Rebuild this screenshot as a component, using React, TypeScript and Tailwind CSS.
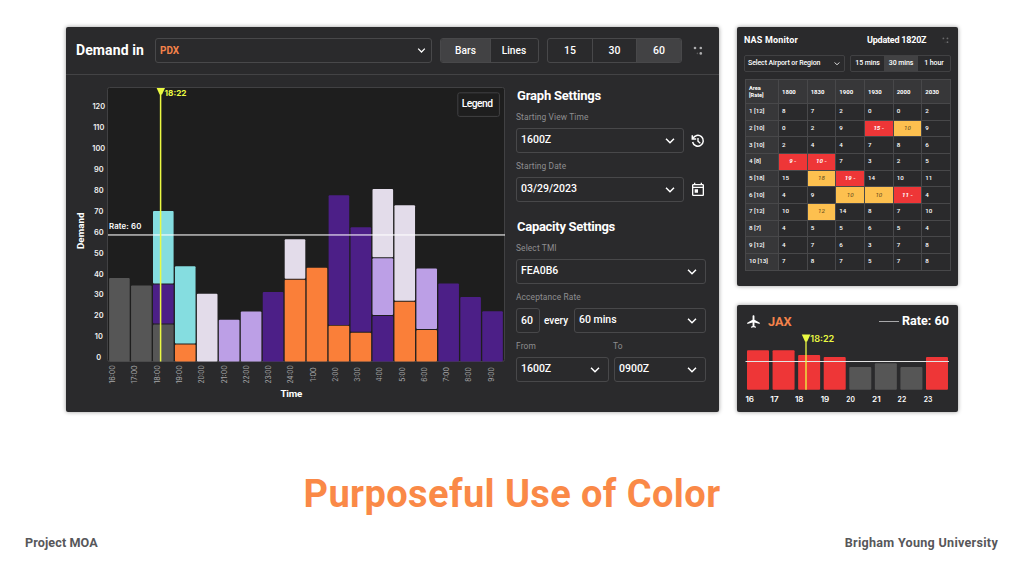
import { ReactNode } from "react"
import clsx from "clsx"
import { MdLocalAirport, MdOutlineToday } from "react-icons/md"

const ORANGE = "#fa7f39"
const PURPLE = "#4c1f87"
const LILAC = "#bc9fe6"
const PALE = "#e3dcea"
const CYAN = "#85dde0"
const GRAY = "#565656"
const RED = "#ee3637"
const YELLOW = "#ebfa42"

type Segment = { top: number; bottom: number; fill: string }

// Segment edges are measured down from the top of the plot
const BASE = 274
const demand: { time: string; segments: Segment[] }[] = [
  { time: "16:00", segments: [{ top: 190.5, bottom: BASE, fill: GRAY }] },
  { time: "17:00", segments: [{ top: 198, bottom: BASE, fill: GRAY }] },
  {
    time: "18:00",
    segments: [
      { top: 123.5, bottom: 196, fill: CYAN },
      { top: 197, bottom: 236, fill: PURPLE },
      { top: 237, bottom: BASE, fill: GRAY },
    ],
  },
  {
    time: "19:00",
    segments: [
      { top: 178.7, bottom: 256, fill: CYAN },
      { top: 257, bottom: BASE, fill: ORANGE },
    ],
  },
  { time: "20:00", segments: [{ top: 206.2, bottom: BASE, fill: PALE }] },
  { time: "21:00", segments: [{ top: 232.3, bottom: BASE, fill: LILAC }] },
  { time: "22:00", segments: [{ top: 224, bottom: BASE, fill: LILAC }] },
  { time: "23:00", segments: [{ top: 204.5, bottom: BASE, fill: PURPLE }] },
  {
    time: "24:00",
    segments: [
      { top: 151.7, bottom: 191.3, fill: PALE },
      { top: 192.3, bottom: BASE, fill: ORANGE },
    ],
  },
  { time: "1:00", segments: [{ top: 180.2, bottom: BASE, fill: ORANGE }] },
  {
    time: "2:00",
    segments: [
      { top: 107.7, bottom: 237.5, fill: PURPLE },
      { top: 238.3, bottom: BASE, fill: ORANGE },
    ],
  },
  {
    time: "3:00",
    segments: [
      { top: 139.8, bottom: 244.3, fill: PURPLE },
      { top: 245.3, bottom: BASE, fill: ORANGE },
    ],
  },
  {
    time: "4:00",
    segments: [
      { top: 101.5, bottom: 169.7, fill: PALE },
      { top: 170.7, bottom: 227.6, fill: LILAC },
      { top: 228.6, bottom: BASE, fill: PURPLE },
    ],
  },
  {
    time: "5:00",
    segments: [
      { top: 117.7, bottom: 213.2, fill: PALE },
      { top: 214.2, bottom: BASE, fill: ORANGE },
    ],
  },
  {
    time: "6:00",
    segments: [
      { top: 181, bottom: 241.6, fill: LILAC },
      { top: 242.6, bottom: BASE, fill: ORANGE },
    ],
  },
  { time: "7:00", segments: [{ top: 196, bottom: BASE, fill: PURPLE }] },
  { time: "8:00", segments: [{ top: 209.6, bottom: BASE, fill: PURPLE }] },
  { time: "9:00", segments: [{ top: 223.8, bottom: BASE, fill: PURPLE }] },
]

const monitorColumns = ["1800", "1830", "1900", "1930", "2000", "2030"]

// "!" marks a cell over capacity, "~" marks a cell at capacity
const monitorRows = [
  { area: "1 [12]", values: ["8", "7", "2", "0", "0", "2"] },
  { area: "2 [10]", values: ["0", "2", "9", "!15", "~10", "9"] },
  { area: "3 [10]", values: ["2", "4", "4", "7", "8", "6"] },
  { area: "4 [8]", values: ["!9", "!10", "7", "3", "2", "5"] },
  { area: "5 [18]", values: ["15", "~18", "!19", "14", "10", "11"] },
  { area: "6 [10]", values: ["4", "9", "~10", "~10", "!11", "4"] },
  { area: "7 [12]", values: ["10", "~12", "14", "8", "7", "10"] },
  { area: "8 [7]", values: ["4", "5", "5", "6", "5", "4"] },
  { area: "9 [12]", values: ["4", "7", "6", "3", "7", "8"] },
  { area: "10 [13]", values: ["7", "8", "7", "5", "7", "8"] },
]

const jaxBars = [
  { hour: "16", x: 749.7, top: 350.3, fill: RED },
  { hour: "17", x: 774.5, top: 350.3, fill: RED },
  { hour: "18", x: 799.2, top: 355, fill: RED },
  { hour: "19", x: 825, top: 357, fill: RED },
  { hour: "20", x: 850.6, top: 367, fill: GRAY },
  { hour: "21", x: 876.4, top: 363.3, fill: GRAY },
  { hour: "22", x: 901.9, top: 367, fill: GRAY },
  { hour: "23", x: 928, top: 357, fill: RED },
]

function Chevron({ className }: { className?: string }) {
  return (
    <svg viewBox="0 0 10 6" className={clsx("shrink-0", className)} fill="none" stroke="#fff" strokeWidth="1.5">
      <path d="M1 0.8 L5 4.8 L9 0.8" />
    </svg>
  )
}

function Dots({ className }: { className?: string }) {
  return (
    <svg viewBox="0 0 10 10" className={clsx("shrink-0", className)} fill="currentColor">
      <circle cx="2" cy="2" r="1.3" />
      <circle cx="7.8" cy="2" r="1.3" />
      <circle cx="7.8" cy="7.4" r="1.3" />
      <circle cx="4.4" cy="7.4" r="0.8" opacity="0.35" />
    </svg>
  )
}

function HistoryIcon({ className }: { className?: string }) {
  return (
    <svg viewBox="0 0 14 14" className={clsx("shrink-0", className)} fill="none" stroke="#fff" strokeWidth="1.5">
      <path d="M1.9 4.6 A5.4 5.4 0 1 1 1.6 8" />
      <path d="M1.3 1.2 V5 H5.2" />
      <path d="M7 4 V7.3 L9.3 9.3" strokeWidth="1.4" />
    </svg>
  )
}

function Select({ className, children }: { className?: string; children: ReactNode }) {
  return (
    <div
      className={clsx(
        "flex h-[25px] items-center justify-between rounded-[3px] border border-[#48484a] pl-1 pr-2 text-[10.5px] font-medium text-white",
        className
      )}
    >
      <span className="-translate-y-px">{children}</span>
      <Chevron className="h-[6px] w-[10px]" />
    </div>
  )
}

function FieldLabel({ children }: { children: ReactNode }) {
  return <div className="h-[11px] text-[8.4px] leading-[11px] tracking-[0.12px] text-[#8e8e90]">{children}</div>
}

function DemandChart() {
  return (
    <svg className="block h-[336px] w-[438px] shrink-0" viewBox="67 75 438 336" fontFamily="Inter, sans-serif">
      <rect x="107.5" y="87.5" width="397" height="274" rx="2" fill="#1e1e1e" stroke="#414143" />
      {demand.map(({ time, segments }, i) => (
        <g key={time}>
          {segments.map(({ top, bottom, fill }) => (
            <rect
              key={top}
              x={109.1 + i * 21.95}
              y={87.5 + top}
              width="20.6"
              height={bottom - top}
              rx="1"
              fill={fill}
            />
          ))}
          <text
            transform={`translate(${115.2 + i * 22.26} 374.5) rotate(-90)`}
            textAnchor="middle"
            textLength={time.length === 5 ? 18.2 : 14.6}
            lengthAdjust="spacingAndGlyphs"
            fontSize="7.2"
            fill="#a6a6a8"
          >
            {time}
          </text>
        </g>
      ))}
      {[120, 110, 100, 90, 80, 70, 60, 50, 40, 30, 20, 10, 0].map((value, i) => (
        <text
          key={value}
          x="98.8"
          y={109.4 + i * 20.89}
          textAnchor="middle"
          fontSize="7.4"
          fontWeight="600"
          fill="#f2f2f2"
        >
          {value}
        </text>
      ))}
      <rect x="108" y="234.2" width="397" height="1.5" fill="#fff" fillOpacity="0.7" />
      <text x="109" y="229.3" textLength="32.3" fontSize="7.8" fontWeight="600" fill="#fff">
        Rate: 60
      </text>
      <path d="M160.6 88 V361.5" stroke={YELLOW} strokeWidth="1.5" />
      <path d="M156.6 88 H165 L162 94.5 H159.6 Z" fill={YELLOW} />
      <text x="164.5" y="95.6" textLength="22" lengthAdjust="spacingAndGlyphs" fontSize="7.8" fontWeight="700" fill={YELLOW}>
        18:22
      </text>
      <rect x="457.8" y="92.8" width="41.6" height="23.6" rx="2" fill="#1e1e1e" stroke="#414143" />
      <g fontFamily="Roboto, sans-serif" fill="#fff">
        <text x="461.8" y="107.3" textLength="31.3" fontSize="10.3" fontWeight="500">
          Legend
        </text>
        <text x="280.4" y="397.2" textLength="21.8" fontSize="9.8" fontWeight="700">
          Time
        </text>
        <text transform="translate(84.4 249) rotate(-90)" textLength="36.5" fontSize="9.8" fontWeight="700">
          Demand
        </text>
      </g>
    </svg>
  )
}

function DemandPanel() {
  return (
    <section className="h-[385px] w-[653px] overflow-hidden rounded-[2px] bg-[#2a2a2c] shadow-[0_0_4px_rgba(0,0,0,0.4)]">
      <header className="flex h-[48px] items-center border-b border-[#434345] pl-[10px]">
        <h1 className="w-[79px] whitespace-nowrap text-[14px] font-bold tracking-[0.1px] text-white">Demand in</h1>
        <div className="flex h-[25px] w-[277px] items-center justify-between rounded-[3px] border border-[#48484a] pl-[4px] pr-[5px]">
          <span className="text-[10px] font-bold text-[#f5824a]">PDX</span>
          <Chevron className="h-[5px] w-[9px]" />
        </div>
        <div className="ml-2 flex h-[25px] w-[99px] overflow-hidden rounded-[3px] border border-[#48484a] text-[10.2px] font-medium text-white">
          <div className="flex w-[50px] items-center justify-center border-r border-[#48484a] bg-[#424244]">Bars</div>
          <div className="flex flex-1 items-center justify-center pr-px">Lines</div>
        </div>
        <div className="ml-2 flex h-[25px] w-[135px] overflow-hidden rounded-[3px] border border-[#48484a] text-[10.5px] font-medium text-white">
          <div className="flex w-[45px] items-center justify-center border-r border-[#48484a]">15</div>
          <div className="flex w-[44px] items-center justify-center border-r border-[#48484a]">30</div>
          <div className="flex flex-1 items-center justify-center bg-[#424244]">60</div>
        </div>
        <Dots className="ml-[11px] h-[10px] w-[10px] text-[#aeaeb0]" />
      </header>

      <div className="flex pl-px">
        <DemandChart />
        <aside className="w-[202px] pl-[11px] pt-[13px]">
          <h2 className="h-[16px] pl-px text-[13px] font-bold leading-[16px] tracking-[-0.2px] text-white">
            Graph Settings
          </h2>
          <div className="mt-[8px]">
            <FieldLabel>Starting View Time</FieldLabel>
          </div>
          <div className="mt-[5px] flex items-center">
            <Select className="w-[168px]">1600Z</Select>
            <HistoryIcon className="ml-[7px] h-[14px] w-[14px]" />
          </div>
          <div className="mt-[8px]">
            <FieldLabel>Starting Date</FieldLabel>
          </div>
          <div className="mt-[5px] flex items-center">
            <Select className="w-[168px]">03/29/2023</Select>
            <MdOutlineToday className="ml-[6px] text-[16px] text-white" />
          </div>

          <h2 className="mt-[17px] h-[16px] pl-px text-[13px] font-bold leading-[16px] tracking-[-0.28px] text-white">
            Capacity Settings
          </h2>
          <div className="mt-[8px]">
            <FieldLabel>Select TMI</FieldLabel>
          </div>
          <Select className="mt-[5px] w-[190px]">FEA0B6</Select>
          <div className="mt-[8px]">
            <FieldLabel>Acceptance Rate</FieldLabel>
          </div>
          <div className="mt-[5px] flex items-center text-[10.5px] font-medium text-white">
            <div className="flex h-[25px] w-[24px] items-center rounded-[3px] border border-[#48484a] pl-1">60</div>
            <span className="ml-1 w-[30px] text-[10px]">every</span>
            <Select className="w-[132px]">60 mins</Select>
          </div>
          <div className="mt-[8px] flex">
            <div className="w-[97px]">
              <FieldLabel>From</FieldLabel>
            </div>
            <FieldLabel>To</FieldLabel>
          </div>
          <div className="mt-[5px] flex gap-[5px]">
            <Select className="w-[93px]">1600Z</Select>
            <Select className="w-[92px]">0900Z</Select>
          </div>
        </aside>
      </div>
    </section>
  )
}

function MonitorCell({ value }: { value: string }) {
  if (value.startsWith("!")) {
    return (
      <td className="border border-[#48484a] bg-[#ee3637] p-0 text-center font-bold italic text-white">
        {value.slice(1)} ‐
      </td>
    )
  }
  if (value.startsWith("~")) {
    return <td className="border border-[#48484a] bg-[#fdc04f] p-0 text-center italic text-[#5d481d]">{value.slice(1)}</td>
  }
  return <td className="border border-[#48484a] p-0 pl-[3px] font-medium">{value}</td>
}

function NasMonitor() {
  return (
    <section className="h-[259px] w-[221px] rounded-[2px] bg-[#2a2a2c] px-[7px] text-white shadow-[0_0_4px_rgba(0,0,0,0.4)]">
      <header className="flex h-[27px] items-center">
        <h2 className="w-[123px] text-[9px] font-bold tracking-[0.18px]">NAS Monitor</h2>
        <span className="w-[75px] whitespace-nowrap text-[9px] font-bold tracking-[-0.22px]">Updated 1820Z</span>
        <Dots className="h-[7px] w-[7px] text-[#6a6a6c]" />
      </header>
      <div className="flex pt-px text-[7px] font-medium tracking-[-0.1px]">
        <div className="flex h-[17px] w-[101px] items-center justify-between rounded-[2px] border border-[#414143] pl-[3px] pr-1">
          <span>Select Airport or Region</span>
          <Chevron className="h-[3.5px] w-[6px]" />
        </div>
        <div className="ml-[5px] flex h-[17px] w-[101px] overflow-hidden rounded-[2px] border border-[#414143]">
          <div className="flex w-[33px] items-center justify-center">15 mins</div>
          <div className="flex w-[34px] items-center justify-center bg-[#424244]">30 mins</div>
          <div className="flex flex-1 items-center justify-center">1 hour</div>
        </div>
      </div>
      <table className="ml-px mt-[7px] w-[206px] table-fixed border-collapse text-[6.2px] leading-[7px]">
        <thead>
          <tr className="h-[24px] bg-[#373739] text-left">
            <th className="w-[33px] border border-[#48484a] p-0 pl-[3px] text-[5.6px]">
              Area
              <br />
              [Rate]
            </th>
            {monitorColumns.map((column) => (
              <th key={column} className="border border-[#48484a] p-0 pl-[3px] text-[6px]">
                {column}
              </th>
            ))}
          </tr>
        </thead>
        <tbody>
          {monitorRows.map(({ area, values }) => (
            <tr key={area} className="h-[16.68px]">
              <td className="border border-[#48484a] bg-[#373739] p-0 pl-[3px] font-medium">{area}</td>
              {values.map((value, i) => (
                <MonitorCell key={i} value={value} />
              ))}
            </tr>
          ))}
        </tbody>
      </table>
    </section>
  )
}

function JaxCard() {
  return (
    <section className="h-[107px] w-[221px] rounded-[2px] bg-[#2a2a2c] text-white shadow-[0_0_4px_rgba(0,0,0,0.4)]">
      <header className="flex h-[29px] items-center pl-[9px] pr-[9px] pt-[4px]">
        <MdLocalAirport className="text-[15px]" />
        <span className="ml-[7px] text-[12.8px] font-bold text-[#f5824a]">JAX</span>
        <span className="ml-auto mr-[3px] h-px w-[20px] bg-[#a8a8aa]" />
        <span className="text-[12.6px] font-bold">Rate: 60</span>
      </header>
      <svg className="block h-[77px] w-[221px]" viewBox="737 334 221 77" fontFamily="Inter, sans-serif">
        {jaxBars.map(({ hour, x, top, fill }, i) => (
          <g key={hour}>
            <rect x={747 + i * 25.57} y={top} width="22" height={389.8 - top} rx="1" fill={fill} />
            <text
              x={x}
              y="401.8"
              textAnchor="middle"
              textLength="8.6"
              lengthAdjust="spacingAndGlyphs"
              fontSize="7.4"
              fontWeight="600"
              fill="#fff"
            >
              {hour}
            </text>
          </g>
        ))}
        <path d="M745.5 361.5 H949" stroke="#e4e4e4" strokeWidth="1" />
        <path d="M806 335 V389.8" stroke={YELLOW} strokeWidth="1.3" />
        <path d="M801.8 334.4 H810.4 L807.2 341.5 H805 Z" fill={YELLOW} />
        <text x="810.3" y="342.4" textLength="24" lengthAdjust="spacingAndGlyphs" fontSize="8.4" fontWeight="600" fill={YELLOW}>
          18:22
        </text>
      </svg>
    </section>
  )
}

export default function App() {
  return (
    <main className="flex h-[576px] w-[1024px] flex-col overflow-hidden bg-white font-[Roboto,sans-serif]">
      <div className="flex gap-[18px] pl-[66px] pt-[27px]">
        <DemandPanel />
        <div className="flex flex-col gap-[19px]">
          <NasMonitor />
          <JaxCard />
        </div>
      </div>
      <h1 className="mt-[58px] h-[48px] text-center text-[38px] font-bold leading-[48px] tracking-[0.4px] text-[#fa8947]">
        Purposeful Use of Color
      </h1>
      <footer className="mt-[17px] flex justify-between pl-[25px] pr-[26px] text-[12.6px] font-bold leading-[16px] text-[#57575a]">
        <span className="tracking-[0.1px]">Project MOA</span>
        <span className="tracking-[0.27px]">Brigham Young University</span>
      </footer>
    </main>
  )
}
